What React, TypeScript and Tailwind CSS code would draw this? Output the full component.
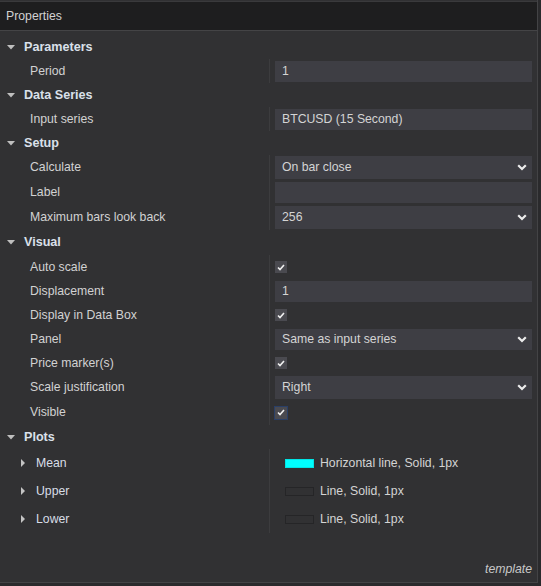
import React from "react";

type Prop =
  | { label: string; kind: "text"; value: string; h?: string }
  | { label: string; kind: "select"; value: string; h?: string; boxH?: string }
  | { label: string; kind: "check"; focus?: boolean; h?: string };

const GROUPS: { title: string; h?: string; rows: Prop[] }[] = [
  { title: "Parameters", rows: [{ label: "Period", kind: "text", value: "1" }] },
  {
    title: "Data Series",
    rows: [{ label: "Input series", kind: "text", value: "BTCUSD (15 Second)" }],
  },
  {
    title: "Setup",
    rows: [
      { label: "Calculate", kind: "select", value: "On bar close", h: "h-[25px]" },
      { label: "Label", kind: "text", value: "", h: "h-[25px]" },
      { label: "Maximum bars look back", kind: "select", value: "256", h: "h-[25px]" },
    ],
  },
  {
    title: "Visual",
    h: "h-[25px]",
    rows: [
      { label: "Auto scale", kind: "check" },
      { label: "Displacement", kind: "text", value: "1" },
      { label: "Display in Data Box", kind: "check" },
      { label: "Panel", kind: "select", value: "Same as input series", boxH: "h-[21px]" },
      { label: "Price marker(s)", kind: "check" },
      { label: "Scale justification", kind: "select", value: "Right", h: "h-[25px]" },
      { label: "Visible", kind: "check", focus: true, h: "h-[25px]" },
    ],
  },
];

const PLOTS = [
  { name: "Mean", desc: "Horizontal line, Solid, 1px", color: "#00ffff" },
  { name: "Upper", desc: "Line, Solid, 1px", color: "" },
  { name: "Lower", desc: "Line, Solid, 1px", color: "" },
];

function DownTri() {
  return (
    <svg width="8" height="5" viewBox="0 0 8 5" className="shrink-0">
      <path d="M0 0 L8 0 L4 4.5 Z" fill="#bfbfbf" />
    </svg>
  );
}

function RightTri() {
  return (
    <svg width="4" height="8" viewBox="0 0 4 8" className="shrink-0">
      <path d="M0 0 L4 4 L0 8 Z" fill="#c4c4c4" />
    </svg>
  );
}

function Chevron() {
  return (
    <svg width="10" height="7" viewBox="0 0 10 7" className="shrink-0">
      <path d="M1.2 1.2 L5 5 L8.8 1.2" fill="none" stroke="#ececec" strokeWidth="2.2" />
    </svg>
  );
}

function Check({ focus }: { focus?: boolean }) {
  return (
    <div
      className={`w-[12px] h-[12px] flex items-center justify-center bg-[#4a4a50] ${
        focus ? "outline outline-1 outline-[#2a3f66]" : ""
      }`}
    >
      <svg width="8" height="7" viewBox="0 0 8 7">
        <path d="M1 3.5 L3 5.5 L7 1" fill="none" stroke="#f0f0f0" strokeWidth="1.6" />
      </svg>
    </div>
  );
}

function Value({ p }: { p: Prop }) {
  if (p.kind === "check") return <Check focus={p.focus} />;
  if (p.kind === "select")
    return (
      <div
        className={`w-full ${p.boxH ?? "h-[23px]"} bg-[#3e3e44] flex items-center justify-between pl-[7px] pr-[5px] text-[#d4d4d4]`}
      >
        <span>{p.value}</span>
        <Chevron />
      </div>
    );
  return (
    <div className="w-full h-[21px] bg-[#3e3e44] flex items-center pl-[7px] text-[#d4d4d4]">
      {p.value}
    </div>
  );
}

export default function App() {
  return (
    <div
      className="w-[541px] h-[586px] bg-[#2a2a2c] text-[12.25px] leading-none"
      style={{ fontFamily: '"Liberation Sans", Arial, sans-serif' }}
    >
      <div className="w-[538px] h-[583px] bg-[#313133] border-r border-b border-[#434345] flex flex-col">
        {/* Title bar */}
        <div className="h-[30px] border-t border-t-[#3a3a3c] mt-[1px] bg-[#1e1e1f] border-b border-b-[#444446] flex items-center pl-[6px] text-[#d2d2d2] text-[12.25px]">
          Properties
        </div>

        <div className="pt-[4px] flex flex-col">
          {GROUPS.map((g) => (
            <div key={g.title} className="flex flex-col">
              <div className={`${g.h ?? "h-[24px]"} flex items-center gap-[9px] pl-[7px]`}>
                <DownTri />
                <span className="font-bold text-[12.6px] text-[#dae0ea]">{g.title}</span>
              </div>
              {g.rows.map((r) => (
                <div key={r.label} className={`${r.h ?? "h-[24px]"} flex`}>
                  <div className="w-[269px] shrink-0 flex items-center pl-[30px] text-[#d2d2d2]">
                    {r.label}
                  </div>
                  <div className="flex-1 border-l border-[#3c3c3e] flex items-center pl-[5px] pr-[5px]">
                    <Value p={r} />
                  </div>
                </div>
              ))}
            </div>
          ))}

          {/* Plots */}
          <div className="h-[24px] flex items-center gap-[9px] pl-[7px]">
            <DownTri />
            <span className="font-bold text-[12.6px] text-[#dae0ea]">Plots</span>
          </div>
          {PLOTS.map((p) => (
            <div key={p.name} className="h-[28px] flex">
              <div className="w-[269px] shrink-0 flex items-center pl-[21px] gap-[11px] text-[#d8dde6]">
                <RightTri />
                <span>{p.name}</span>
              </div>
              <div className="flex-1 border-l border-[#3c3c3e] flex items-center pl-[15px] gap-[6px] text-[#d4d4d4]">
                <div
                  className={`w-[29px] h-[9px] border ${
                    p.color ? "border-[#00e5e5] bg-[#00ffff]" : "border-[#252527]"
                  }`}
                />
                <span>{p.desc}</span>
              </div>
            </div>
          ))}
        </div>

        <div className="flex-1 flex items-end justify-end pr-[5px] pb-[7px]">
          <span className="italic text-[#c8c8c8]">template</span>
        </div>
      </div>
    </div>
  );
}
